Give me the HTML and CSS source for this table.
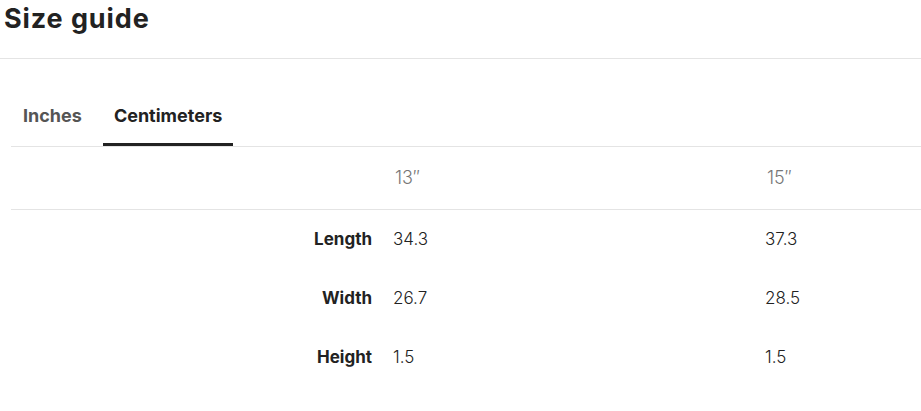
FILE: index.html
```html
<!DOCTYPE html>
<html>
<head>
<meta charset="utf-8">
<link rel="stylesheet" href="styles.css">
</head>
<body>
<div class="page">
  <header class="head">
    <h1 class="title">Size guide</h1>
  </header>
  <div class="content">
    <nav class="tabs">
      <a class="tab">Inches</a>
      <a class="tab tab-active">Centimeters</a>
    </nav>
    <table class="grid">
      <colgroup>
        <col class="c-label"><col class="c-val"><col class="c-last">
      </colgroup>
      <thead>
        <tr><th></th><th class="size">13″</th><th class="size">15″</th></tr>
      </thead>
      <tbody>
        <tr><th class="label">Length</th><td>34.3</td><td>37.3</td></tr>
        <tr><th class="label">Width</th><td>26.7</td><td>28.5</td></tr>
        <tr><th class="label">Height</th><td>1.5</td><td>1.5</td></tr>
      </tbody>
    </table>
  </div>
</div>
</body>
</html>
```
FILE: styles.css
```css
* { box-sizing: border-box; }
html, body { margin: 0; padding: 0; background: #fff; overflow: hidden; }
body { font-family: "Inter", "Lato", sans-serif; color: #222; width: 921px; }
.page { width: 921px; overflow: hidden; }
.head { height: 59px; border-bottom: 1px solid #e4e4e4; padding: 3px 0 0 4px; }
.title { margin: 0; font-size: 27px; font-weight: 700; line-height: 32px; letter-spacing: 0.9px; color: #222; }
.content { padding: 40px 0 0 11px; }
.tabs { display: flex; gap: 10px; border-bottom: 1px solid #e4e4e4; height: 48px; padding-left: 1px; }
.tab { display: block; padding: 6px 11px 0; font-size: 18px; font-weight: 700; color: #555; height: 47px; line-height: 22px; border-bottom: 3px solid transparent; cursor: pointer; }
.tab-active { color: #222; border-bottom-color: #222; }
.grid { border-collapse: collapse; table-layout: fixed; width: 910px; }
.c-label { width: 370px; }
.c-val { width: 372px; }
.c-last { width: 168px; }
.grid thead tr { height: 62px; border-bottom: 1px solid #e4e4e4; }
.grid tbody tr { height: 59px; }
.size { text-align: left; font-weight: 300; font-size: 18px; color: #777; padding: 0 0 0 14px; }
.label { text-align: right; font-weight: 700; font-size: 17px; color: #222; padding: 0 9px 0 0; }
.grid td { font-size: 17px; font-weight: 300; color: #222; padding: 0 0 0 12px; }
```
